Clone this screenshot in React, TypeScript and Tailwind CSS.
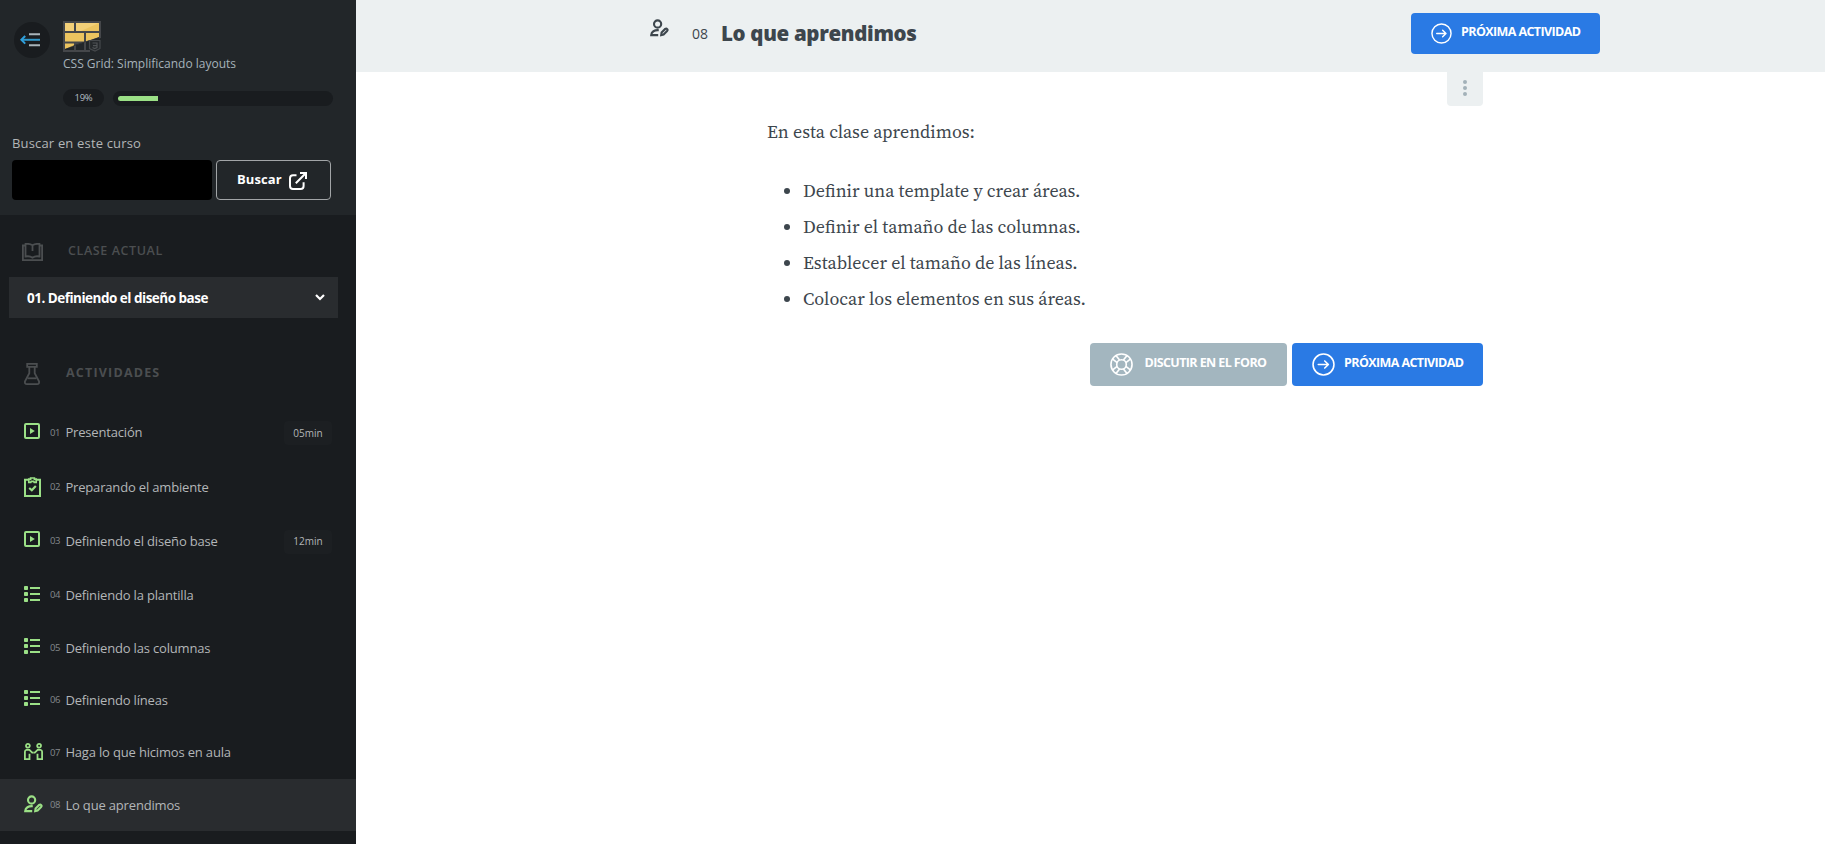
import React from "react";

const sans = "font-['Open_Sans','Noto_Sans',sans-serif]";

function PersonPen({ className }: { className: string }) {
  return (
    <svg viewBox="0 0 19 18" className={className} fill="none" stroke="currentColor" strokeWidth="2.1">
      <circle cx="7.6" cy="5" r="3.6" />
      <path d="M8.8 11.2C4.4 10.9 1.4 12.7 1.2 16.1H8.2" />
      <path d="M11.2 16.2L11.6 13.4L15.2 9.9Q16.3 9.1 17.2 10.1Q18 11.1 17.1 12L13.6 15.6Z" />
    </svg>
  );
}

function VideoIcon() {
  return (
    <svg viewBox="0 0 16 16" className="size-4" fill="none" stroke="currentColor">
      <rect x="1" y="1" width="14" height="14" rx="1" strokeWidth="2" />
      <path d="M6 5L10.8 8L6 11Z" fill="currentColor" stroke="none" />
    </svg>
  );
}

function ClipboardIcon() {
  return (
    <svg viewBox="0 0 17 20" className="h-5 w-[17px]" fill="none" stroke="currentColor" strokeWidth="2">
      <path d="M4.5 2.8H1V19H16V2.8H12.5" />
      <path d="M4.8 5.4V2.2H6.6V1H10.4V2.2H12.2V5.4H10.2L9.8 4.4H7.2L6.8 5.4Z" strokeWidth="1.7" />
      <path d="M5.2 11L7.8 13.3L11.8 9" strokeWidth="2.1" />
    </svg>
  );
}

function ListIcon() {
  return (
    <svg viewBox="0 0 16 16" className="size-4" fill="currentColor">
      <rect x="0" y="0" width="4" height="4" rx=".8" />
      <rect x="0" y="6" width="4" height="4" rx=".8" />
      <rect x="0" y="12" width="4" height="4" rx=".8" />
      <rect x="6" y="1" width="10" height="2" />
      <rect x="6" y="7" width="10" height="2" />
      <rect x="6" y="13" width="10" height="2" />
    </svg>
  );
}

function PeopleIcon() {
  return (
    <svg viewBox="0 0 19 17" className="h-[17px] w-[19px]" fill="none" stroke="currentColor" strokeWidth="1.8">
      <circle cx="3.9" cy="2.8" r="1.9" />
      <circle cx="15.1" cy="2.8" r="1.9" />
      <path d="M9.5 9.6H8.2L5.4 6.8H2.4Q.9 7 .9 8.8V16.1H5.5V10.8" />
      <path d="M9.5 9.6H10.8L13.6 6.8H16.6Q18.1 7 18.1 8.8V16.1H13.5V10.8" />
    </svg>
  );
}

function ArrowCircle({ className }: { className: string }) {
  return (
    <svg viewBox="0 0 22 22" className={className} fill="none" stroke="currentColor" strokeWidth="1.5" strokeLinecap="round" strokeLinejoin="round">
      <circle cx="11" cy="11" r="10" />
      <path d="M6 11H15.4M12.2 7.6L15.7 11L12.2 14.4" />
    </svg>
  );
}

function LifeBuoy() {
  return (
    <svg viewBox="0 0 24 24" className="size-[23px]" fill="none" stroke="currentColor" strokeWidth="1.7">
      <circle cx="12" cy="12" r="11" />
      <circle cx="12" cy="12" r="5" />
      <path d="M6.4 2.8L10 7.4M2.8 6.4L7.4 10M17.6 2.8L14 7.4M21.2 6.4L16.6 10M6.4 21.2L10 16.6M2.8 17.6L7.4 14M17.6 21.2L14 16.6M21.2 17.6L16.6 14" />
    </svg>
  );
}

function CourseLogo() {
  return (
    <svg viewBox="0 0 38 31" className="h-[31px] w-[38px]">
      <path d="M0 0H38V17L27 20V31H0Z" fill="#45474a" />
      <path d="M2 2H11V10H2Z" fill="#f3d078" />
      <path d="M13 2H36V10H13Z" fill="#ecc45f" />
      <path d="M13 2H36L18 10H13Z" fill="#f3d078" />
      <path d="M2 12H21V20.5H2Z" fill="#ecc45f" />
      <path d="M23 12H36V16L23 20.5Z" fill="#ecc45f" />
      <path d="M2 22.5H11V25L2 28Z" fill="#ecc45f" />
      <path d="M2 28L11 25V29H2ZM13 24.2L21 21.5V29H13ZM23 20.8L27 19.5V29H23Z" fill="#222629" />
      <path d="M2 28L36 16.2V19H27L13 23.5L2 28Z" fill="#26282a" />
      <path d="M26.5 19.5H37V27.5L32 30L26.5 27.5Z" fill="#25282b" stroke="#45484b" strokeWidth="1.2" />
      <path d="M29.5 22H34V26.5L31.5 27.5L29.5 26.5M30 24.6H33.5" fill="none" stroke="#505356" strokeWidth="1.2" />
    </svg>
  );
}

type Activity = {
  number: string;
  title: string;
  icon: React.ReactNode;
  row: string;
  time?: string;
};

const activities: Activity[] = [
  { number: "01", title: "Presentación", icon: <VideoIcon />, row: "h-[55px] [&>svg]:-mt-[3px]", time: "05min" },
  { number: "02", title: "Preparando el ambiente", icon: <ClipboardIcon />, row: "h-[54px]" },
  { number: "03", title: "Definiendo el diseño base", icon: <VideoIcon />, row: "h-[54px] [&>svg]:-mt-1", time: "12min" },
  { number: "04", title: "Definiendo la plantilla", icon: <ListIcon />, row: "h-[53px] pt-px [&>svg]:-mt-[2px]" },
  { number: "05", title: "Definiendo las columnas", icon: <ListIcon />, row: "h-[53px] pt-px [&>svg]:-mt-1" },
  { number: "06", title: "Definiendo líneas", icon: <ListIcon />, row: "h-[52px] [&>svg]:-mt-1" },
  { number: "07", title: "Haga lo que hicimos en aula", icon: <PeopleIcon />, row: "h-[53px] [&>svg]:-mt-[2px]" },
  { number: "08", title: "Lo que aprendimos", icon: <PersonPen className="h-[18px] w-[19px]" />, row: "h-[52px] bg-[#292c2f] [&>svg]:-mt-[2px]" },
];

function Sidebar() {
  return (
    <aside className="flex h-full w-[356px] shrink-0 flex-col overflow-hidden bg-[#191c1f]">
      <div className="h-[215px] shrink-0 bg-[#222629]">
        <div className="flex h-[89px] pl-[14px]">
          <button className="mt-[22px] flex size-9 items-center justify-center rounded-full bg-[#191c1f]">
            <svg viewBox="0 0 20 14" className="mr-1 h-[14px] w-5" fill="none">
              <path d="M9 1.3H20M9 12.2H20" stroke="#a9b4ba" strokeWidth="2" />
              <path d="M1.5 6.8H20" stroke="#2f97c9" strokeWidth="2" />
              <path d="M5.2 3L1.4 6.8L5.2 10.6" stroke="#2f9fdc" strokeWidth="2" />
            </svg>
          </button>
          <div className="ml-[13px] pt-[21px]">
            <CourseLogo />
            <h2 className="mt-1 text-[12px] leading-4 text-[#a6b2ba]">CSS Grid: Simplificando layouts</h2>
          </div>
        </div>
        <div className="flex items-center pl-[63px]">
          <span className="flex h-[18px] w-[41px] items-center justify-center rounded-full bg-[#191c1f] text-[9.5px] tracking-[-0.3px] text-[#b6bfc4]">19%</span>
          <div className="ml-[9px] flex h-[15px] w-[220px] items-center rounded-full bg-[#191c1f] px-[5px]">
            <div className="h-[5px] w-10 rounded-l-full bg-[#9be086]" />
          </div>
        </div>
        <label className="mt-[26px] block pl-3 text-[13px] leading-5 tracking-[0.17px] text-[#b3b6b8]">Buscar en este curso</label>
        <div className="mt-[7px] flex gap-1 pl-3">
          <div className="h-10 w-[200px] rounded-[4px] bg-black" />
          <button className="flex h-10 w-[115px] items-center rounded-[4px] border border-[#a2a5a7] pl-5 text-[13px] font-bold text-white">
            <span className="-mt-px w-[52px] text-left tracking-[0.1px]">Buscar</span>
            <svg viewBox="0 0 18 18" className="mt-[2px] size-[18px]" fill="none" stroke="currentColor" strokeWidth="2">
              <path d="M7.5 3.2H4Q1 3.2 1 6.2V14Q1 17 4 17H11.6Q14.6 17 14.6 14V10.3" />
              <path d="M11 1H17V7M17 1L6.8 11.2" />
            </svg>
          </button>
        </div>
      </div>

      <div className="flex h-[62px] shrink-0 items-center pt-2 pl-[22px] text-[#4b4e50]">
        <svg viewBox="0 0 21 18" className="mt-[3px] h-[18px] w-[21px]" fill="none" stroke="currentColor" strokeWidth="1.8">
          <path d="M3.5 2.5H.9V17.1H20.1V2.5H17.5" />
          <path d="M10.5 2.2C8 .7 5.5.7 3.5 1V13.5C6 13 8.5 13.2 10.5 14.7C12.5 13.2 15 13 17.5 13.5V1C15.5.7 13 .7 10.5 2.2V8" />
        </svg>
        <h3 className="mt-[2px] ml-[25px] text-[12.5px] font-semibold tracking-[0.6px]">CLASE ACTUAL</h3>
      </div>
      <div className="ml-[9px] flex h-[41px] w-[329px] shrink-0 items-center justify-between bg-[#292c2f] pr-[13px] pl-[18px] text-white">
        <span className="mt-[2px] text-[13.5px] font-bold tracking-[-0.5px]">01. Definiendo el diseño base</span>
        <svg viewBox="0 0 10 7" className="-mt-px h-[7px] w-[10px]" fill="none" stroke="currentColor" strokeWidth="2.2">
          <path d="M1 1L5 5L9 1" />
        </svg>
      </div>
      <div className="flex h-[87px] shrink-0 items-center pt-6 pl-6 text-[#4b4e50]">
        <svg viewBox="0 0 16 22" className="mt-[1px] h-[22px] w-4" fill="none" stroke="currentColor" strokeWidth="1.8">
          <path d="M3.2.9H12.8V3.8H3.2Z" />
          <path d="M5.3 4V10.3L1 18.3Q.4 21.1 3 21.1H13Q15.6 21.1 15 18.3L10.7 10.3V4" />
          <path d="M3.5 15.3H12.5" />
        </svg>
        <h3 className="ml-[26px] text-[12.5px] font-bold tracking-[1.2px]">ACTIVIDADES</h3>
      </div>
      <ul>
        {activities.map((a) => (
          <li key={a.number} className={`grid grid-cols-[26px_15px_219px_48px] items-center pl-6 text-[#9be086] ${a.row}`}>
            {a.icon}
            <span className="mt-px text-[9.5px] tracking-[-0.4px] text-[#85898c]">{a.number}</span>
            <span className="mt-px pl-[0.4px] text-[13px] tracking-[-0.17px] text-[#b3b6b8]">{a.title}</span>
            {a.time && (
              <span className="mt-px flex h-6 items-center justify-center rounded-[4px] bg-[#1c1f22] text-[10px] text-[#b3b6b8]">{a.time}</span>
            )}
          </li>
        ))}
      </ul>
    </aside>
  );
}

export default function App() {
  return (
    <div className={`flex h-[844px] w-[1825px] overflow-hidden bg-white ${sans}`}>
      <Sidebar />
      <main className="flex-1">
        <header className="flex h-[72px] bg-[#ecf0f1] pl-[294px] text-[#3d464d]">
          <PersonPen className="mt-[19px] h-[18px] w-[19px]" />
          <span className="mt-[24px] ml-[23px] w-[29px] text-[14px] leading-5">08</span>
          <h1 className="mt-[18px] w-[690px] text-[20.5px] leading-[30px] font-extrabold tracking-[-0.33px]">Lo que aprendimos</h1>
          <button className="mt-[13px] flex h-[41px] w-[189px] items-center rounded-[4px] bg-[#2a7ae4] pl-5 text-white">
            <ArrowCircle className="size-[21px]" />
            <span className="-mt-[2px] ml-[9px] text-[12.5px] font-bold tracking-[-0.6px] whitespace-nowrap">PRÓXIMA ACTIVIDAD</span>
          </button>
        </header>
        <section className="ml-[411px] w-[716px]">
          <div className="flex justify-end">
            <button className="flex h-[34px] w-9 flex-col items-center gap-[2.4px] rounded-b-[4px] bg-[#ecf0f1] pt-[7.5px]">
              <span className="size-1 rounded-full bg-[#a3b1b9]" />
              <span className="size-1 rounded-full bg-[#a3b1b9]" />
              <span className="size-1 rounded-full bg-[#a3b1b9]" />
            </button>
          </div>
          <div className="font-['Source_Serif_Pro','Source_Serif_4','Liberation_Serif',serif] text-[18px] leading-9 text-[#3d464d]">
            <p className="mt-2">En esta clase aprendimos:</p>
            <ul className="mt-[23px] list-disc pl-9">
              <li>Definir una template y crear áreas.</li>
              <li>Definir el tamaño de las columnas.</li>
              <li>Establecer el tamaño de las líneas.</li>
              <li>Colocar los elementos en sus áreas.</li>
            </ul>
          </div>
          <div className="mt-[26px] flex justify-end gap-[5px] text-[12.5px] font-bold tracking-[-0.6px] whitespace-nowrap text-white">
            <button className="flex h-[43px] w-[197px] items-center rounded-[4px] bg-[#a3b6bf] pl-5">
              <LifeBuoy />
              <span className="-mt-[3px] ml-[11.5px]">DISCUTIR EN EL FORO</span>
            </button>
            <button className="flex h-[43px] w-[191px] items-center rounded-[4px] bg-[#2a7ae4] pl-5">
              <ArrowCircle className="size-[23px]" />
              <span className="-mt-[3px] ml-[9px]">PRÓXIMA ACTIVIDAD</span>
            </button>
          </div>
        </section>
      </main>
    </div>
  );
}
